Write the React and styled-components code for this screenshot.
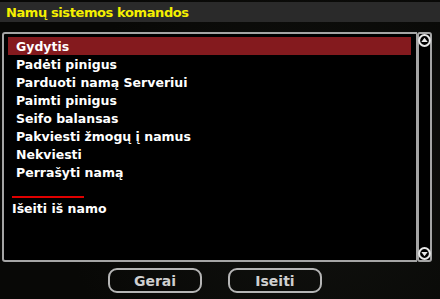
import styled, { createGlobalStyle } from "styled-components";

const Global = createGlobalStyle`
  html, body {
    margin: 0;
    padding: 0;
    background: #0a0a08;
  }
`;

const items = [
  "Gydytis",
  "Padėti pinigus",
  "Parduoti namą Serveriui",
  "Paimti pinigus",
  "Seifo balansas",
  "Pakviesti žmogų į namus",
  "Nekviesti",
  "Perrašyti namą",
];

const Window = styled.div`
  width: 440px;
  height: 299px;
  display: flex;
  flex-direction: column;
  background: radial-gradient(circle at 70% 60%, #11120f 0%, #080806 70%);
  font-family: "DejaVu Sans", Verdana, sans-serif;
  overflow: hidden;
`;

const TitleBar = styled.div`
  margin-top: 2px;
  height: 20px;
  background: #2a2a2a;
  display: flex;
  align-items: center;
  padding-left: 6px;
  color: #f5f000;
  font-weight: bold;
  font-size: 13px;
  letter-spacing: -0.4px;
`;

const Body = styled.div`
  display: flex;
  margin: 10px 0 0 2px;
  height: 230px;
`;

const ListBox = styled.div`
  flex: 1;
  background: #000;
  border: 2px solid #a5a5a5;
  border-right-width: 1px;
  border-radius: 3px 0 0 3px;
  padding: 3px 0 0 4px;
  display: flex;
  flex-direction: column;
`;

const Row = styled.div`
  height: 18px;
  margin-right: 5px;
  padding-left: 8px;
  display: flex;
  align-items: center;
  color: #fff;
  font-weight: bold;
  font-size: 12.5px;
  background: ${(p) => (p.$active ? "#841a1e" : "transparent")};
`;

const Divider = styled.div`
  width: 72px;
  height: 2px;
  background: #e00000;
  margin: 15px 0 0 4px;
`;

const ExitRow = styled(Row)`
  padding-left: 4px;
  margin-top: 1px;
`;

const ScrollBar = styled.div`
  width: 11px;
  border: 2px solid #a5a5a5;
  border-radius: 3px;
  background: #000;
  display: flex;
  flex-direction: column;
  justify-content: space-between;
  align-items: center;
  padding: 0;
  margin-right: 8px;
`;

const Arrow = ({ down }) => (
  <svg width="13" height="13" viewBox="0 0 13 13" style={{ marginLeft: -1, marginRight: -1 }}>
    <circle cx="6.5" cy="6.5" r="5.4" fill="none" stroke="#e8e8e8" strokeWidth="2" />
    {down ? (
      <path d="M3.3 5 L9.7 5 L6.5 9.2 Z" fill="#e8e8e8" />
    ) : (
      <path d="M3.3 8 L9.7 8 L6.5 3.8 Z" fill="#e8e8e8" />
    )}
  </svg>
);

const Buttons = styled.div`
  display: flex;
  justify-content: center;
  gap: 26px;
  margin-top: 6px;
  padding-right: 10px;
`;

const Button = styled.button`
  width: 94px;
  height: 25px;
  background: transparent;
  border: 2px solid #b5b5b5;
  border-radius: 9px;
  color: #cfcfcf;
  font-family: "DejaVu Sans", Verdana, sans-serif;
  font-weight: bold;
  font-size: 14px;
  padding: 0;
`;

export default function App() {
  return (
    <>
      <Global />
      <Window>
        <TitleBar>Namų sistemos komandos</TitleBar>
        <Body>
          <ListBox>
            {items.map((t, i) => (
              <Row key={t} $active={i === 0}>
                {t}
              </Row>
            ))}
            <Divider />
            <ExitRow>Išeiti iš namo</ExitRow>
          </ListBox>
          <ScrollBar>
            <Arrow />
            <Arrow down />
          </ScrollBar>
        </Body>
        <Buttons>
          <Button>Gerai</Button>
          <Button>Iseiti</Button>
        </Buttons>
      </Window>
    </>
  );
}
